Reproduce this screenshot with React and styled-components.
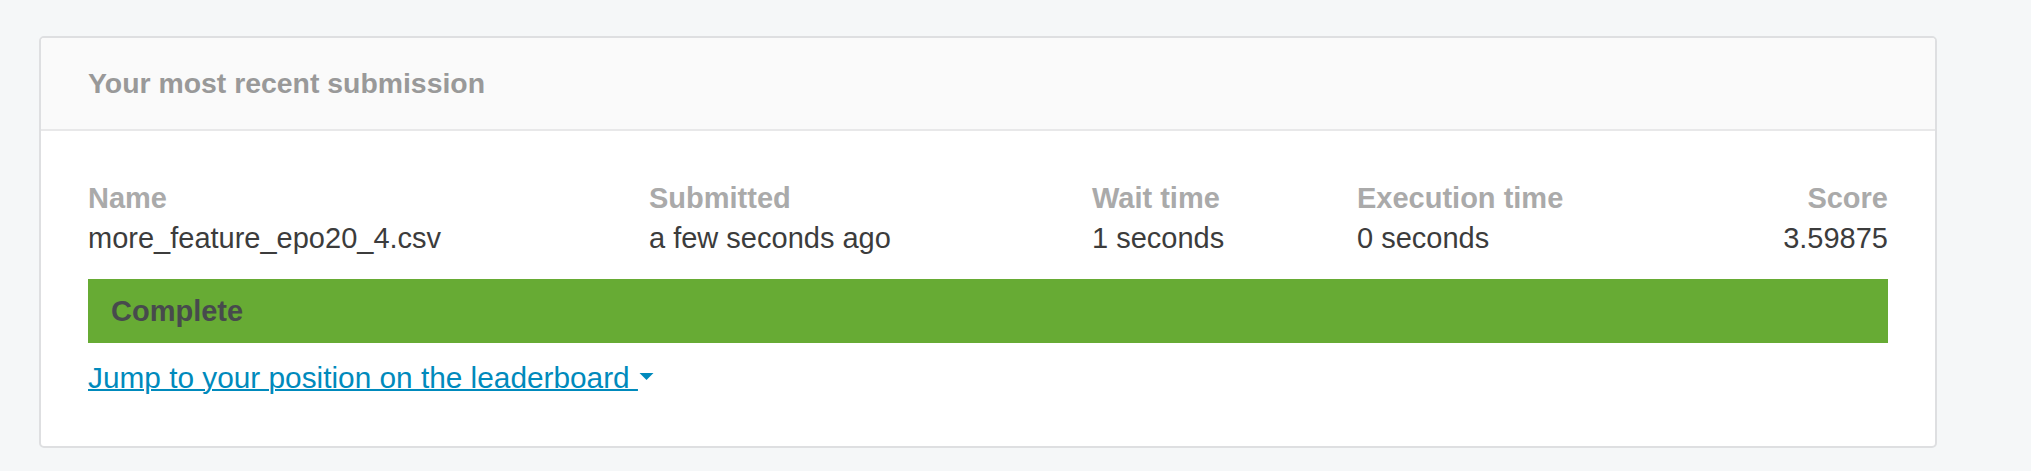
import React from "react";
import styled, { createGlobalStyle } from "styled-components";

const GlobalStyle = createGlobalStyle`
  html, body {
    margin: 0;
    padding: 0;
    background: #f5f7f8;
    font-family: "Liberation Sans", Arial, sans-serif;
  }
`;

const columns = [
  { label: "Name", value: "more_feature_epo20_4.csv" },
  { label: "Submitted", value: "a few seconds ago" },
  { label: "Wait time", value: "1 seconds" },
  { label: "Execution time", value: "0 seconds" },
  { label: "Score", value: "3.59875", right: true },
];

const App = () => {
  return (
    <Page>
      <GlobalStyle />
      <Card>
        <CardHeader>
          <Title>Your most recent submission</Title>
        </CardHeader>
        <CardBody>
          <InfoGrid>
            {columns.map((col) => (
              <Cell key={col.label} $right={col.right}>
                <Label>{col.label}</Label>
                <Value>{col.value}</Value>
              </Cell>
            ))}
          </InfoGrid>
          <StatusBar>Complete</StatusBar>
          <JumpLink href="#">
            <LinkText>Jump to your position on the leaderboard </LinkText>
            <Caret viewBox="0 0 14 7" aria-hidden="true">
              <path d="M0 0 H14 L7 7 Z" fill="currentColor" />
            </Caret>
          </JumpLink>
        </CardBody>
      </Card>
    </Page>
  );
};

const Page = styled.div`
  padding: 36px 94px 23px 39px;
`;

const Card = styled.div`
  background: #fff;
  border: 2px solid #dedfe1;
  border-radius: 5px;
  overflow: hidden;
`;

const CardHeader = styled.div`
  background: #fafafa;
  border-bottom: 2px solid #e8e8e9;
  padding: 28px 47px 29px;
`;

const Title = styled.h2`
  margin: 0;
  font-size: 28.4px;
  line-height: 34px;
  font-weight: 700;
  color: #999999;
`;

const CardBody = styled.div`
  padding: 47px 47px 48px;
`;

const InfoGrid = styled.div`
  display: grid;
  grid-template-columns: 561px 443px 265px 1fr auto;
`;

const Cell = styled.div`
  display: flex;
  flex-direction: column;
  align-items: ${(p) => (p.$right ? "flex-end" : "flex-start")};
  font-size: 29px;
  line-height: 40px;
`;

const Label = styled.span`
  font-weight: 700;
  color: #aaaaaa;
`;

const Value = styled.span`
  color: #3c3c3c;
  white-space: nowrap;
`;

const StatusBar = styled.div`
  margin-top: 21px;
  height: 64px;
  background: #67ab34;
  color: #474a4d;
  font-size: 29px;
  font-weight: 700;
  line-height: 64px;
  padding: 0 23px;
`;

const JumpLink = styled.a`
  display: inline-flex;
  align-items: center;
  margin-top: 15px;
  color: #008abc;
  font-size: 29.8px;
  line-height: 40px;
  text-decoration: none;
`;

const LinkText = styled.span`
  text-decoration: underline;
  text-decoration-thickness: 2px;
  white-space: pre;
`;

const Caret = styled.svg`
  width: 15px;
  height: 7px;
  margin-left: 1px;
  margin-top: -4px;
`;

export default App;
